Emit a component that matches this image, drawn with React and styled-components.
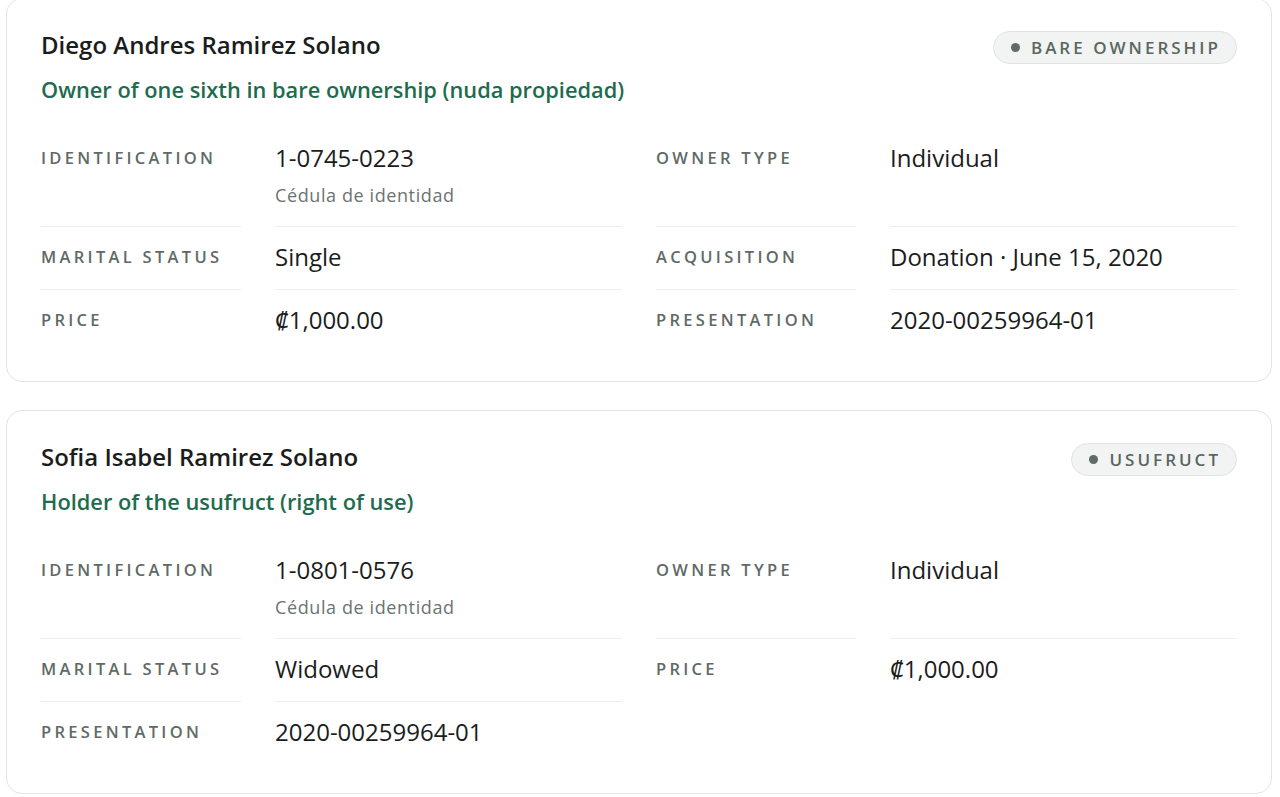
import styled, { createGlobalStyle } from 'styled-components';

const GlobalStyle = createGlobalStyle`
  html, body {
    margin: 0;
    background: #ffffff;
    font-family: 'Open Sans', 'Noto Sans', sans-serif;
    -webkit-font-smoothing: antialiased;
  }
`;

const Page = styled.div`
  display: flex;
  flex-direction: column;
  gap: 28px;
  padding: 0 8px 0 6px;
  margin-top: -2px;
`;

const Card = styled.section`
  border: 1.5px solid #e2e5e3;
  border-radius: 16px;
  background: #fff;
  padding: 31px 34px 30px 34px;
  height: 384px;
  box-sizing: border-box;
`;

const Header = styled.div`
  display: flex;
  justify-content: space-between;
  align-items: flex-start;
`;

const Name = styled.h2`
  margin: 0;
  font-size: 24px;
  line-height: 30px;
  font-weight: 600;
  color: #1b1d1c;
`;

const Role = styled.p`
  margin: 16px 0 0;
  font-size: 21.8px;
  line-height: 28px;
  font-weight: 600;
  color: #1e6c4e;
`;

const Badge = styled.span`
  display: inline-flex;
  align-items: center;
  gap: 11px;
  height: 33px;
  box-sizing: border-box;
  padding: 0 15px 0 17px;
  border: 1.5px solid #dfe3e1;
  border-radius: 999px;
  background: #f2f4f3;
  color: #5a6661;
  font-size: 17px;
  font-weight: 600;
  letter-spacing: 3px;
  margin-top: 0.5px;
`;

const Dot = styled.span`
  width: 9px;
  height: 9px;
  border-radius: 50%;
  background: #5f6b66;
`;

const Grid = styled.dl`
  display: grid;
  grid-template-columns: 200px 1fr 200px 1fr;
  column-gap: 34px;
  margin: 24px 0 0;
`;

const cellBorder = ({ $last }) => ($last ? 'none' : '1.5px solid #eceeed');

const Label = styled.dt`
  margin: 0;
  padding: 17px 0 19px;
  font-size: 16.5px;
  line-height: 26px;
  font-weight: 600;
  letter-spacing: 3.3px;
  text-transform: uppercase;
  color: #5f6a66;
  border-bottom: ${cellBorder};
  white-space: nowrap;
`;

const Value = styled.dd`
  margin: 0;
  padding: 17px 0 19px;
  font-size: 24px;
  line-height: 26px;
  color: #1b1d1c;
  border-bottom: ${cellBorder};
`;

const Sub = styled.div`
  margin-top: 12px;
  font-size: 18px;
  line-height: 24px;
  color: #6b7471;
  letter-spacing: 0.6px;
`;

const owners = [
  {
    name: 'Diego Andres Ramirez Solano',
    role: 'Owner of one sixth in bare ownership (nuda propiedad)',
    badge: 'BARE OWNERSHIP',
    rows: [
      [
        { label: 'Identification', value: '1-0745-0223', sub: 'Cédula de identidad' },
        { label: 'Owner type', value: 'Individual' },
      ],
      [
        { label: 'Marital status', value: 'Single' },
        { label: 'Acquisition', value: 'Donation · June 15, 2020' },
      ],
      [
        { label: 'Price', value: '₡1,000.00' },
        { label: 'Presentation', value: '2020-00259964-01' },
      ],
    ],
  },
  {
    name: 'Sofia Isabel Ramirez Solano',
    role: 'Holder of the usufruct (right of use)',
    badge: 'USUFRUCT',
    rows: [
      [
        { label: 'Identification', value: '1-0801-0576', sub: 'Cédula de identidad' },
        { label: 'Owner type', value: 'Individual' },
      ],
      [
        { label: 'Marital status', value: 'Widowed' },
        { label: 'Price', value: '₡1,000.00' },
      ],
      [{ label: 'Presentation', value: '2020-00259964-01' }],
    ],
  },
];

const OwnerCard = ({ owner }) => (
  <Card>
    <Header>
      <div>
        <Name>{owner.name}</Name>
        <Role>{owner.role}</Role>
      </div>
      <Badge>
        <Dot />
        {owner.badge}
      </Badge>
    </Header>
    <Grid>
      {owner.rows.map((row, i) =>
        row.map((field, j) => {
          // last field in each column gets no divider
          const last = i === owner.rows.length - 1 || !owner.rows[i + 1][j];
          return [
            <Label key={`l${i}${j}`} $last={last}>
              {field.label}
            </Label>,
            <Value key={`v${i}${j}`} $last={last}>
              {field.value}
              {field.sub && <Sub>{field.sub}</Sub>}
            </Value>,
          ];
        })
      )}
    </Grid>
  </Card>
);

const App = () => (
  <>
    <GlobalStyle />
    <Page>
      {owners.map((owner) => (
        <OwnerCard key={owner.name} owner={owner} />
      ))}
    </Page>
  </>
);

export default App;
